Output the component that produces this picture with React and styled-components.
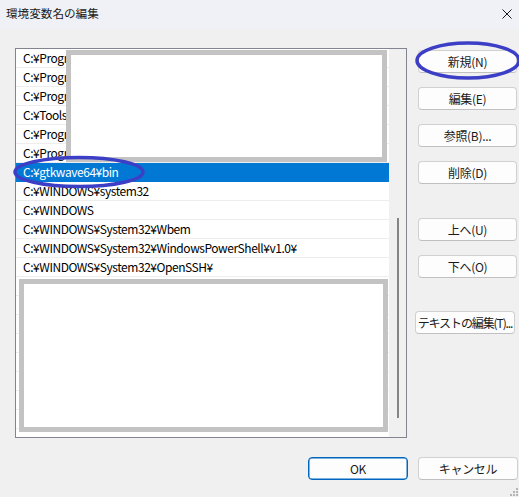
import React from "react";
import styled, { createGlobalStyle } from "styled-components";

const GlobalStyle = createGlobalStyle`
  html, body { margin: 0; padding: 0; background: #f0f0f0; }
  body { font-family: "Noto Sans CJK JP", "Noto Sans", sans-serif; }
  * { box-sizing: border-box; }
`;

const Window = styled.div`
  position: relative;
  width: 519px;
  height: 497px;
  background: #f0f0f0;
  display: flex;
  flex-direction: column;
  overflow: hidden;
  font-family: "Noto Sans CJK JP", "Noto Sans", sans-serif;
  color: #1a1a1a;
`;

const TitleBar = styled.div`
  height: 29px;
  background: #eff1f6;
  display: flex;
  align-items: center;
  justify-content: space-between;
  padding: 0 7px 0 6px;
`;

const Title = styled.span`
  font-size: 11.6px;
  line-height: 1;
  margin-top: -1px;
`;

const CloseButton = styled.div`
  width: 10px;
  height: 10px;
  display: flex;
  margin-top: -1px;
`;

const Body = styled.div`
  display: flex;
  padding: 19px 0 0 15px;
  gap: 11px;
`;

const ListBox = styled.div`
  width: 392px;
  height: 390px;
  border: 1px solid #82858f;
  background: #f0f0f0;
  display: flex;
`;

const ListArea = styled.div`
  position: relative;
  width: 373px;
  background: #ffffff;
  overflow: hidden;
`;

const Row = styled.div`
  height: 19px;
  padding-left: 7px;
  border-bottom: 1px solid #ededed;
  font-size: 12px;
  line-height: 18px;
  letter-spacing: -0.45px;
  white-space: nowrap;
  color: ${(p) => (p.$selected ? "#ffffff" : "#000000")};
  background: ${(p) => (p.$selected ? "#0078d4" : "transparent")};
  border-bottom-color: ${(p) => (p.$selected ? "#0078d4" : "#ededed")};
`;

const Cover = styled.div`
  position: absolute;
  left: ${(p) => p.$left}px;
  top: ${(p) => p.$top}px;
  width: ${(p) => p.$width}px;
  height: ${(p) => p.$height}px;
  border: 5px solid #c3c3c3;
  background: #ffffff;
`;

const ScrollTrack = styled.div`
  flex: 1;
  display: flex;
  justify-content: center;
  padding-top: 169px;
`;

const ScrollThumb = styled.div`
  width: 2px;
  height: 200px;
  background: #858585;
`;

const ButtonColumn = styled.div`
  display: flex;
  flex-direction: column;
  width: 99px;
  padding-top: 2px;
`;

const Button = styled.div`
  width: ${(p) => (p.$width ? p.$width : 99)}px;
  height: 23px;
  margin-top: ${(p) => p.$gap || 0}px;
  margin-left: ${(p) => p.$shift || 0}px;
  border: 1px solid ${(p) => (p.$primary ? "#0067c0" : "#d0d0d0")};
  border-bottom-color: ${(p) => (p.$primary ? "#0067c0" : "#c0c0c0")};
  border-radius: 4px;
  background: #fdfdfd;
  display: flex;
  align-items: center;
  justify-content: center;
  font-size: 12px;
  line-height: 1;
  letter-spacing: ${(p) => (p.$tight ? "-1.1px" : "-0.3px")};
  color: #1a1a1a;
  white-space: nowrap;
  box-shadow: ${(p) => (p.$primary ? "inset 0 0 0 0.5px #0067c0" : "none")};
`;

const Footer = styled.div`
  display: flex;
  justify-content: flex-end;
  gap: 10px;
  padding: 19px 1px 0 0;
`;

const Grip = styled.svg`
  position: absolute;
  right: 1px;
  bottom: 1px;
`;

const Annotations = styled.svg`
  position: absolute;
  left: 0;
  top: 0;
  pointer-events: none;
`;

const paths = [
  "C:¥Program Files¥Common Files",
  "C:¥Program Files¥Git¥cmd",
  "C:¥Program Files¥nodejs¥",
  "C:¥Tools¥bin",
  "C:¥Program Files¥Python¥Scripts",
  "C:¥Program Files¥Python¥",
  "C:¥gtkwave64¥bin",
  "C:¥WINDOWS¥system32",
  "C:¥WINDOWS",
  "C:¥WINDOWS¥System32¥Wbem",
  "C:¥WINDOWS¥System32¥WindowsPowerShell¥v1.0¥",
  "C:¥WINDOWS¥System32¥OpenSSH¥",
];

const SELECTED = 6;

export default function App() {
  const rows = [...paths, ...Array(9).fill("")];
  return (
    <>
      <GlobalStyle />
      <Window>
        <TitleBar>
          <Title>環境変数名の編集</Title>
          <CloseButton>
            <svg width="10" height="10" viewBox="0 0 10 10">
              <path d="M0.5 0.5 L9.5 9.5 M9.5 0.5 L0.5 9.5" stroke="#1a1a1a" strokeWidth="1" fill="none" />
            </svg>
          </CloseButton>
        </TitleBar>
        <Body>
          <ListBox>
            <ListArea>
              {rows.map((text, i) => (
                <Row key={i} $selected={i === SELECTED}>
                  {text}
                </Row>
              ))}
              <Cover $left={50} $top={1} $width={321} $height={112} />
              <Cover $left={3} $top={230} $width={369} $height={153} />
            </ListArea>
            <ScrollTrack>
              <ScrollThumb />
            </ScrollTrack>
          </ListBox>
          <ButtonColumn>
            <Button>新規(N)</Button>
            <Button $gap={14}>編集(E)</Button>
            <Button $gap={14}>参照(B)...</Button>
            <Button $gap={14}>削除(D)</Button>
            <Button $gap={34}>上へ(U)</Button>
            <Button $gap={14}>下へ(O)</Button>
            <Button $gap={33} $shift={-3} $width={100} $tight>テキストの編集(T)...</Button>
          </ButtonColumn>
        </Body>
        <Footer>
          <Button $primary $width={100}>OK</Button>
          <Button $width={100}>キャンセル</Button>
        </Footer>
        <Grip width="8" height="8" viewBox="0 0 8 8">
          <g fill="#b5b5b5">
            <rect x="6" y="0" width="2" height="2" />
            <rect x="3" y="3" width="2" height="2" />
            <rect x="6" y="3" width="2" height="2" />
            <rect x="0" y="6" width="2" height="2" />
            <rect x="3" y="6" width="2" height="2" />
            <rect x="6" y="6" width="2" height="2" />
          </g>
        </Grip>
        <Annotations width="519" height="497" viewBox="0 0 519 497">
          <ellipse cx="468" cy="60.5" rx="51" ry="17.5" fill="none" stroke="#3c3fc6" strokeWidth="3.5" />
          <ellipse cx="79" cy="172" rx="64" ry="14.5" fill="none" stroke="#3c3fc6" strokeWidth="3.5" />
        </Annotations>
      </Window>
    </>
  );
}
